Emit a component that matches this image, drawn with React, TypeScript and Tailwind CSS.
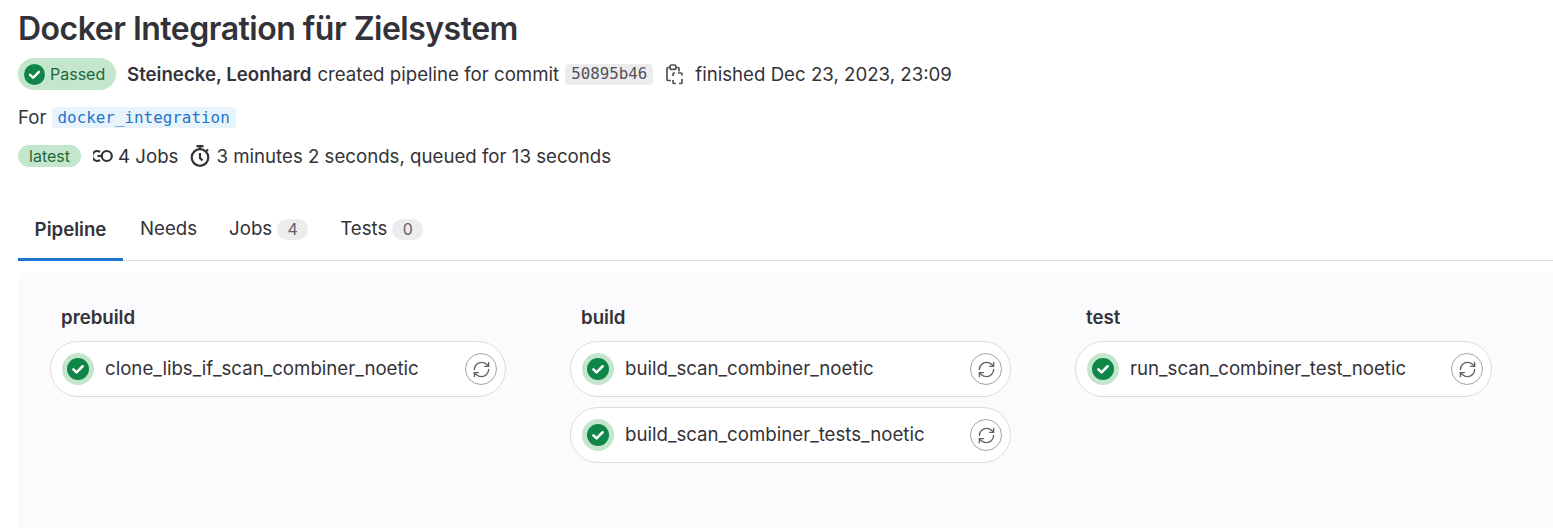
import { RefreshCw } from "lucide-react";

const sans = "font-['Inter',sans-serif]";
const mono = "font-['DejaVu_Sans_Mono',monospace]";

interface Stage {
  name: string;
  width: string;
  jobs: string[];
}

const stages: Stage[] = [
  { name: "prebuild", width: "w-[456px]", jobs: ["clone_libs_if_scan_combiner_noetic"] },
  { name: "build", width: "w-[441px]", jobs: ["build_scan_combiner_noetic", "build_scan_combiner_tests_noetic"] },
  { name: "test", width: "w-[417px]", jobs: ["run_scan_combiner_test_noetic"] },
];

function SuccessIcon({ className }: { className?: string }) {
  return (
    <svg viewBox="0 0 20 20" className={className}>
      <circle cx="10" cy="10" r="10" fill="#108548" />
      <path d="M5.8 10.3l2.9 2.8 5.5-5.6" fill="none" stroke="#fff" strokeWidth="2.3" strokeLinecap="round" strokeLinejoin="round" />
    </svg>
  );
}

function ClipboardIcon() {
  return (
    <svg viewBox="0 0 17 21" className="h-[21px] w-[17px] text-[#535158]" fill="none" stroke="currentColor" strokeWidth="1.7">
      <path d="M4 3.5H2a1 1 0 0 0-1 1v11a1 1 0 0 0 1 1h3" />
      <path d="M10 3.5h2a1 1 0 0 1 1 1v3" />
      <rect x="4.2" y="1" width="5.6" height="4.4" rx="1" />
      <path d="M7 12v-2a1 1 0 0 1 1-1h1M12 9h3a1 1 0 0 1 1 1v1.5M16 15v3.5a1 1 0 0 1-1 1h-2M10 19.5H8a1 1 0 0 1-1-1V16" />
    </svg>
  );
}

function ChainIcon() {
  return (
    <svg viewBox="0 0 20 14" className="h-[14px] w-[20px] text-[#333238]" fill="none" stroke="currentColor" strokeWidth="2.2">
      <path d="M7 3A4.9 4.9 0 1 0 7 11" />
      <circle cx="13.8" cy="7" r="5" />
      <path d="M4.5 7h3.5" />
    </svg>
  );
}

function TimerIcon() {
  return (
    <svg viewBox="0 0 20 22" className="h-[22px] w-[20px] text-[#333238]" fill="none" stroke="currentColor" strokeWidth="2.2">
      <circle cx="10" cy="12.5" r="8.3" />
      <path d="M6.5 1.2h7M10 1.2v3M10 8v5l2.5 2.5M16.5 4.5l1.5 1.5" />
    </svg>
  );
}

function JobPill({ name, width }: { name: string; width: string }) {
  return (
    <div className={`flex h-[56px] ${width} items-center justify-between rounded-[28px] border border-[#dcdcde] bg-white pl-[11px] pr-[8px]`}>
      <div className="flex items-center gap-[11px]">
        <span className="flex h-[32px] w-[32px] items-center justify-center rounded-full bg-[#c3e6cd]">
          <SuccessIcon className="h-[22px] w-[22px]" />
        </span>
        <span className="text-[18.67px] text-[#333238]">{name}</span>
      </div>
      <span className="flex h-[32px] w-[32px] items-center justify-center rounded-full border border-[#a4a3a8] bg-white">
        <RefreshCw className="h-[19px] w-[19px] text-[#626168]" strokeWidth={1.7} />
      </span>
    </div>
  );
}

function CountBadge({ count }: { count: number }) {
  return (
    <span className="flex h-[21px] w-[31px] items-center justify-center rounded-full bg-[#ececef] text-[16px] text-[#626168]">{count}</span>
  );
}

export default function App() {
  return (
    <div className={`${sans} h-[528px] w-[1553px] overflow-hidden bg-white pl-[18px] text-[#333238]`}>
      <h1 className="pt-[10px] text-[32px] leading-[38px] font-semibold tracking-[-0.5px]">Docker Integration für Zielsystem</h1>

      {/* Pipeline info */}
      <div className="mt-[10px] flex h-[32px] items-center text-[18.67px]">
        <span className="flex h-[32px] w-[98px] items-center gap-[5px] rounded-full bg-[#c3e6cd] pl-[6px] text-[16px] text-[#24663b]">
          <SuccessIcon className="h-[21px] w-[21px]" />
          Passed
        </span>
        <span className="ml-[11px] pt-[2px] font-semibold">Steinecke, Leonhard</span>
        <span className="ml-[6px] pt-[2px]">created pipeline for commit</span>
        <span className={`${mono} ml-[6px] flex h-[21px] items-center rounded-[4px] bg-[#ececef] px-[6px] text-[15.8px] text-[#535158]`}>50895b46</span>
        <span className="ml-[13px] flex"><ClipboardIcon /></span>
        <span className="ml-[12px] pt-[2px]">finished Dec 23, 2023, 23:09</span>
      </div>

      <div className="mt-[17px] flex h-[21px] items-center text-[18.67px]">
        For
        <span className={`${mono} ml-[5px] flex h-[21px] items-center rounded-[4px] bg-[#e9f3fc] px-[6px] text-[15.9px] text-[#1f75cb]`}>docker_integration</span>
      </div>

      <div className="mt-[17px] flex h-[22px] items-center text-[18.67px]">
        <span className="flex h-[22px] w-[63px] items-center justify-center rounded-full bg-[#c3e6cd] text-[16px] text-[#24663b]">latest</span>
        <span className="ml-[12px]"><ChainIcon /></span>
        <span className="ml-[5px] pt-[1px]">4 Jobs</span>
        <span className="ml-[12px]"><TimerIcon /></span>
        <span className="ml-[6px] pt-[1px]">3 minutes 2 seconds, queued for 13 seconds</span>
      </div>

      {/* Tabs */}
      <div className="mt-[37px] flex h-[57px] items-start border-b border-[#dcdcde] text-[18.67px]">
        <div className="flex h-[57px] w-[105px] items-center justify-center border-b-[3px] border-[#1f75cb] pb-[3px] font-semibold">Pipeline</div>
        <div className="ml-[1px] flex h-[50px] items-center px-[16px]">Needs</div>
        <div className="flex h-[50px] items-center gap-[5px] px-[16px]">Jobs <CountBadge count={4} /></div>
        <div className="flex h-[50px] items-center gap-[5px] px-[16px]">Tests <CountBadge count={0} /></div>
      </div>

      {/* Pipeline graph */}
      <div className="mt-[11px] flex h-[256px] gap-[64px] rounded-tl-[8px] bg-[#fbfafd] pl-[32px] pt-[35px]">
        {stages.map((stage) => (
          <div key={stage.name} className={stage.width}>
            <div className="mb-[12px] pl-[11px] text-[18.67px] leading-[22px] font-semibold">{stage.name}</div>
            <div className="flex flex-col gap-[10px]">
              {stage.jobs.map((job) => (
                <JobPill key={job} name={job} width={stage.width} />
              ))}
            </div>
          </div>
        ))}
      </div>
    </div>
  );
}
